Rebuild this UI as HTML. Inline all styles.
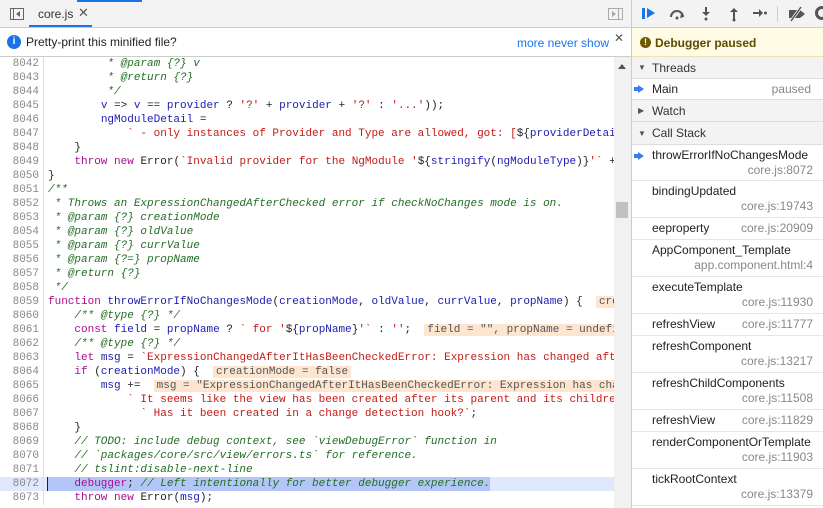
<!DOCTYPE html>
<html><head><meta charset="utf-8"><style>
*{margin:0;padding:0;box-sizing:border-box}
body{width:823px;height:508px;overflow:hidden;background:#fff;font-family:"Liberation Sans",sans-serif;font-size:12px;color:#222;position:relative}
.abs{position:absolute}
#top{left:0;top:0;width:631px;height:28px;background:#f3f3f3;border-bottom:1px solid #ccc}
#info{left:0;top:28px;width:631px;height:29px;border-bottom:1px solid #ccc;background:#fff}
#code{left:0;top:57px;width:614px;height:451px;overflow:hidden;font-family:"Liberation Mono",monospace;font-size:11px}
.ln{height:14px;line-height:14px;white-space:pre;position:relative}
.n{display:inline-block;width:44px;text-align:right;padding-right:4px;color:#888;border-right:1px solid #ddd;margin-right:4px;height:14px}
.c{color:#236e25;font-style:italic}
.k{color:#aa0d91}
.s{color:#c41a16}
.v{color:#1c1cb0}
.iv{background:#fde5cf;color:#555;padding:0 3px}
#sb{left:614px;top:57px;width:17px;height:451px;background:#f1f1f1}
#right{left:631px;top:0;width:192px;height:508px;border-left:1px solid #ccc;background:#fff}
.hdr{background:#f3f3f3;border-bottom:1px solid #ddd;height:22px;line-height:22px;padding-left:20px;position:relative;color:#333}
.hdr .tri{position:absolute;left:6px;top:0;font-size:8px;color:#555}
.fr{border-bottom:1px solid #e6e6e6;padding-left:20px;position:relative;color:#222}
.fr .loc{color:#888;text-align:right;padding-right:10px}
.arrow{position:absolute;left:6px;top:5px;width:0;height:0;border-left:6px solid #3b7cf0;border-top:4px solid transparent;border-bottom:4px solid transparent}
.arrow:before{content:"";position:absolute;left:-10px;top:-2px;width:4px;height:4px;background:#3b7cf0}
</style></head><body>
<div id="top" class="abs">
  <div class="abs" style="left:77px;top:0;width:65px;height:2px;background:#1a73e8"></div>
  <div class="abs" style="left:10px;top:8px;width:14px;height:12px;border:1px solid #666"></div>
  <div class="abs" style="left:13px;top:8px;width:1px;height:12px;background:#666"></div>
  <div class="abs" style="left:16px;top:11px;border-right:4px solid #666;border-top:3px solid transparent;border-bottom:3px solid transparent"></div>
  <div class="abs" style="left:38px;top:7px;color:#333">core.js</div>
  <div class="abs" style="left:78px;top:5px;color:#555;font-size:13px">✕</div>
  <div class="abs" style="left:29px;top:25px;width:63px;height:2px;background:#1a73e8"></div>
  <div class="abs" style="left:608px;top:8px;width:15px;height:12px;border:1px solid #aaa"></div>
  <div class="abs" style="left:618px;top:8px;width:1px;height:12px;background:#aaa"></div>
  <div class="abs" style="left:612px;top:11px;border-left:4px solid #aaa;border-top:3px solid transparent;border-bottom:3px solid transparent"></div>
</div>
<div id="info" class="abs">
  <div class="abs" style="left:7px;top:7px;width:14px;height:14px;border-radius:50%;background:#1a73e8;color:#fff;font-size:10px;font-weight:bold;text-align:center;line-height:14px">i</div>
  <div class="abs" style="left:26px;top:7px;color:#222">Pretty-print this minified file?</div>
  <div class="abs" style="left:517px;top:8px;color:#1a73e8">more never show</div>
  <div class="abs" style="left:614px;top:3px;color:#555;font-size:12px">✕</div>
</div>
<div id="code" class="abs">
<div class="ln"><span class="n">8042</span><span class="c">         * @param {?} v</span></div>
<div class="ln"><span class="n">8043</span><span class="c">         * @return {?}</span></div>
<div class="ln"><span class="n">8044</span><span class="c">         */</span></div>
<div class="ln"><span class="n">8045</span>        <span class="v">v</span> =&gt; <span class="v">v</span> == <span class="v">provider</span> ? <span class="s">'?'</span> + <span class="v">provider</span> + <span class="s">'?'</span> : <span class="s">'...'</span>));</div>
<div class="ln"><span class="n">8046</span>        <span class="v">ngModuleDetail</span> =</div>
<div class="ln"><span class="n">8047</span><span class="s">            ` - only instances of Provider and Type are allowed, got: [</span>${<span class="v">providerDetails</span>}]`;</div>
<div class="ln"><span class="n">8048</span>    }</div>
<div class="ln"><span class="n">8049</span>    <span class="k">throw</span> <span class="k">new</span> Error(<span class="s">`Invalid provider for the NgModule '</span>${<span class="v">stringify</span>(<span class="v">ngModuleType</span>)}<span class="s">'`</span> + ngModuleDetail);</div>
<div class="ln"><span class="n">8050</span>}</div>
<div class="ln"><span class="n">8051</span><span class="c">/**</span></div>
<div class="ln"><span class="n">8052</span><span class="c"> * Throws an ExpressionChangedAfterChecked error if checkNoChanges mode is on.</span></div>
<div class="ln"><span class="n">8053</span><span class="c"> * @param {?} creationMode</span></div>
<div class="ln"><span class="n">8054</span><span class="c"> * @param {?} oldValue</span></div>
<div class="ln"><span class="n">8055</span><span class="c"> * @param {?} currValue</span></div>
<div class="ln"><span class="n">8056</span><span class="c"> * @param {?=} propName</span></div>
<div class="ln"><span class="n">8057</span><span class="c"> * @return {?}</span></div>
<div class="ln"><span class="n">8058</span><span class="c"> */</span></div>
<div class="ln"><span class="n">8059</span><span class="k">function</span> <span class="v">throwErrorIfNoChangesMode</span>(<span class="v">creationMode</span>, <span class="v">oldValue</span>, <span class="v">currValue</span>, <span class="v">propName</span>) {  <span class="iv">creationMode = false, oldValue = undefined</span></div>
<div class="ln"><span class="n">8060</span>    <span class="c">/** @type {?} */</span></div>
<div class="ln"><span class="n">8061</span>    <span class="k">const</span> <span class="v">field</span> = <span class="v">propName</span> ? <span class="s">` for '</span>${<span class="v">propName</span>}<span class="s">'`</span> : <span class="s">''</span>;  <span class="iv">field = "", propName = undefined</span></div>
<div class="ln"><span class="n">8062</span>    <span class="c">/** @type {?} */</span></div>
<div class="ln"><span class="n">8063</span>    <span class="k">let</span> <span class="v">msg</span> = <span class="s">`ExpressionChangedAfterItHasBeenCheckedError: Expression has changed after it was checked</span></div>
<div class="ln"><span class="n">8064</span>    <span class="k">if</span> (<span class="v">creationMode</span>) {  <span class="iv">creationMode = false</span></div>
<div class="ln"><span class="n">8065</span>        <span class="v">msg</span> +=  <span class="iv">msg = "ExpressionChangedAfterItHasBeenCheckedError: Expression has changed after</span></div>
<div class="ln"><span class="n">8066</span><span class="s">            ` It seems like the view has been created after its parent and its children have been</span></div>
<div class="ln"><span class="n">8067</span><span class="s">              ` Has it been created in a change detection hook?`</span>;</div>
<div class="ln"><span class="n">8068</span>    }</div>
<div class="ln"><span class="n">8069</span>    <span class="c">// TODO: include debug context, see `viewDebugError` function in</span></div>
<div class="ln"><span class="n">8070</span>    <span class="c">// `packages/core/src/view/errors.ts` for reference.</span></div>
<div class="ln"><span class="n">8071</span>    <span class="c">// tslint:disable-next-line</span></div>
<div class="ln" style="background:#e0e8fb"><span class="n">8072</span><span style="background:#b3c6f7;display:inline-block;height:14px;border-left:1px solid #222;margin-left:-1px">    <span class="k">debugger</span>; <span class="c">// Left intentionally for better debugger experience.</span></span></div>
<div class="ln"><span class="n">8073</span>    <span class="k">throw</span> <span class="k">new</span> Error(<span class="v">msg</span>);</div>
</div>
<div id="sb" class="abs">
  <div class="abs" style="left:4px;top:7px;border-bottom:5px solid #555;border-left:4px solid transparent;border-right:4px solid transparent"></div>
  <div class="abs" style="left:2px;top:145px;width:12px;height:16px;background:#c1c1c1"></div>
</div>
<div id="right" class="abs">
  <div style="height:28px;background:#f3f3f3;border-bottom:1px solid #ccc;position:relative;color:#555">
    <div class="abs" style="left:10px;top:8px;width:3px;height:11px;background:#1a73e8"></div>
    <div class="abs" style="left:15px;top:8px;border-left:8px solid #1a73e8;border-top:5.5px solid transparent;border-bottom:5.5px solid transparent"></div>
    <svg class="abs" style="left:36px;top:6px" width="18" height="16"><path d="M3 11a6 6 0 0 1 12 0" stroke="#555" stroke-width="2" fill="none"/><path d="M13 8l3 3l-4 1z" fill="#555"/><circle cx="9" cy="12" r="1.5" fill="#555"/></svg>
    <svg class="abs" style="left:68px;top:6px" width="12" height="16"><path d="M6 1v7" stroke="#555" stroke-width="2"/><path d="M2 6l4 4l4-4z" fill="#555"/><circle cx="6" cy="13" r="1.5" fill="#555"/></svg>
    <svg class="abs" style="left:96px;top:6px" width="12" height="16"><path d="M6 6v7" stroke="#555" stroke-width="2"/><path d="M2 6l4-4l4 4z" fill="#555"/><circle cx="6" cy="14" r="1.5" fill="#555"/></svg>
    <svg class="abs" style="left:120px;top:7px" width="16" height="12"><path d="M1 6h7" stroke="#555" stroke-width="2"/><path d="M7 2l4 4l-4 4z" fill="#555"/><circle cx="13.5" cy="6" r="1.5" fill="#555"/></svg>
    <div class="abs" style="left:145px;top:6px;width:1px;height:16px;background:#ccc"></div>
    <svg class="abs" style="left:155px;top:6px" width="20" height="16"><path d="M2 4h11l5 4l-5 4h-11z" fill="#555"/><path d="M4 15L14 1" stroke="#f3f3f3" stroke-width="3"/><path d="M4 15L14 1" stroke="#555" stroke-width="1.5"/></svg>
    <div class="abs" style="left:183px;top:6px;width:14px;height:14px;border:3px solid #555;border-radius:50%"></div>
  </div>
  <div style="height:29px;background:#fffbe5;border-bottom:1px solid #ede3b8;position:relative">
    <div class="abs" style="left:8px;top:9px;width:11px;height:11px;border-radius:50%;background:#6b5b00;color:#fffbe5;font-size:9px;font-weight:bold;text-align:center;line-height:11px">!</div>
    <div class="abs" style="left:23px;top:8px;color:#5c4b00;font-weight:bold">Debugger paused</div>
  </div>
  <div class="hdr"><span class="tri">▼</span>Threads</div>
  <div class="fr" style="height:21px;line-height:21px;border-bottom:1px solid #ddd"><span class="arrow" style="top:6px"></span>Main<span class="abs" style="right:12px;color:#888">paused</span></div>
  <div class="hdr"><span class="tri">▶</span>Watch</div>
  <div class="hdr" style="height:23px;line-height:23px"><span class="tri">▼</span>Call Stack</div>
  <div class="fr" style="height:36px;padding-top:3px;line-height:15px"><span class="arrow" style="top:7px"></span>throwErrorIfNoChangesMode<div class="loc">core.js:8072</div></div>
  <div class="fr" style="height:37px;padding-top:3px;line-height:15px">bindingUpdated<div class="loc">core.js:19743</div></div>
  <div class="fr" style="height:22px;line-height:21px">eeproperty<span class="abs" style="right:10px;color:#888">core.js:20909</span></div>
  <div class="fr" style="height:37px;padding-top:3px;line-height:15px">AppComponent_Template<div class="loc">app.component.html:4</div></div>
  <div class="fr" style="height:37px;padding-top:3px;line-height:15px">executeTemplate<div class="loc">core.js:11930</div></div>
  <div class="fr" style="height:22px;line-height:21px">refreshView<span class="abs" style="right:10px;color:#888">core.js:11777</span></div>
  <div class="fr" style="height:37px;padding-top:3px;line-height:15px">refreshComponent<div class="loc">core.js:13217</div></div>
  <div class="fr" style="height:37px;padding-top:3px;line-height:15px">refreshChildComponents<div class="loc">core.js:11508</div></div>
  <div class="fr" style="height:22px;line-height:21px">refreshView<span class="abs" style="right:10px;color:#888">core.js:11829</span></div>
  <div class="fr" style="height:37px;padding-top:3px;line-height:15px">renderComponentOrTemplate<div class="loc">core.js:11903</div></div>
  <div class="fr" style="height:37px;padding-top:3px;line-height:15px">tickRootContext<div class="loc">core.js:13379</div></div>
</div>
</body></html>
